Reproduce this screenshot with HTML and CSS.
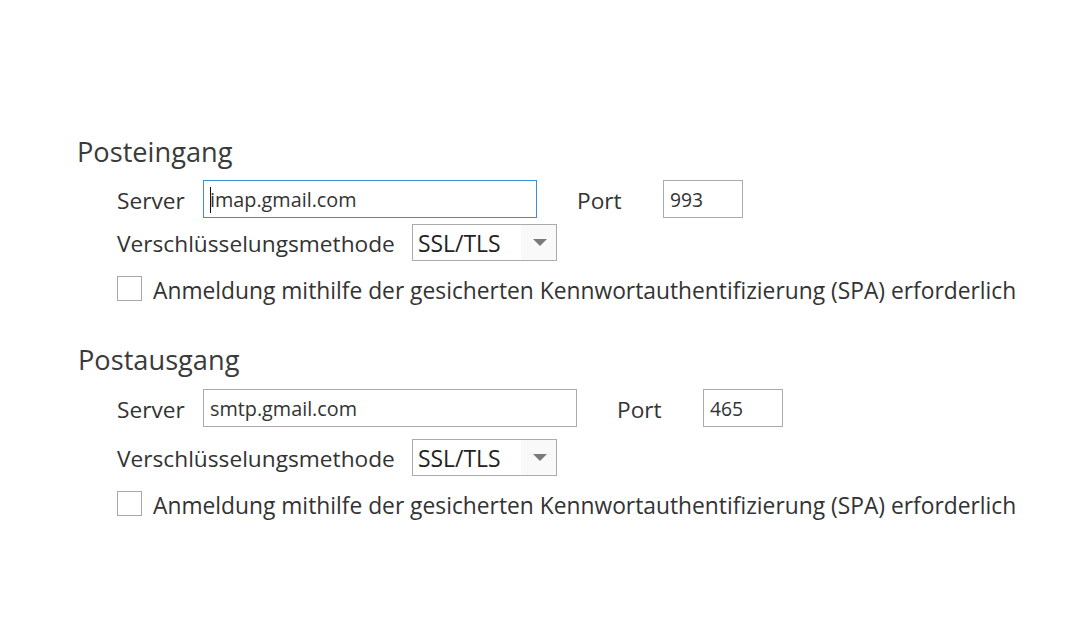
FILE: index.html
```html
<!DOCTYPE html>
<html lang="de">
<head>
<meta charset="utf-8">
<title>Servereinstellungen</title>
<link rel="stylesheet" href="styles.css">
</head>
<body>
<main class="page">
  <section class="group group-in">
    <h2 class="group-title">Posteingang</h2>
    <div class="row row-server">
      <span class="label label-short">Server</span>
      <div class="field field-server field-focus"><span class="caret"></span>imap.gmail.com</div>
      <span class="label label-short label-port">Port</span>
      <div class="field field-port">993</div>
    </div>
    <div class="row row-enc">
      <span class="label label-long">Verschlüsselungsmethode</span>
      <div class="select"><span class="select-value">SSL/TLS</span><span class="select-btn"><span class="arrow"></span></span></div>
    </div>
    <label class="check-row">
      <span class="check"></span>
      <span class="check-text">Anmeldung mithilfe der gesicherten Kennwortauthentifizierung (SPA) erforderlich</span>
    </label>
  </section>
  <section class="group group-out">
    <h2 class="group-title">Postausgang</h2>
    <div class="row row-server">
      <span class="label label-short">Server</span>
      <div class="field field-server field-wide">smtp.gmail.com</div>
      <span class="label label-short label-port">Port</span>
      <div class="field field-port">465</div>
    </div>
    <div class="row row-enc">
      <span class="label label-long">Verschlüsselungsmethode</span>
      <div class="select"><span class="select-value">SSL/TLS</span><span class="select-btn"><span class="arrow"></span></span></div>
    </div>
    <label class="check-row">
      <span class="check"></span>
      <span class="check-text">Anmeldung mithilfe der gesicherten Kennwortauthentifizierung (SPA) erforderlich</span>
    </label>
  </section>
</main>
</body>
</html>
```
FILE: styles.css
```css
* { box-sizing: border-box; }
html, body { margin: 0; padding: 0; background: #fff; }
body {
  width: 1085px;
  height: 644px;
  overflow: hidden;
  font-family: "Open Sans", "Noto Sans", sans-serif;
  color: #333;
}
.page {
  padding: 135px 0 0 77px;
}
.group-title {
  margin: 0;
  font-size: 27.2px;
  font-weight: 400;
  line-height: 34px;
  color: #3a3a3a;
}
.group-out { margin-top: 42px; }
.group-out .group-title { margin-left: 1px; }
.row {
  display: flex;
  align-items: center;
  padding-left: 40px;
}
.group-in .row-server { margin-top: 11px; }
.group-out .row-server { margin-top: 12px; }
.group-in .row-enc { margin-top: 6px; }
.group-out .row-enc { margin-top: 12px; }
.label {
  font-size: 22.7px;
  line-height: 28px;
  padding-top: 3px;
  color: #333;
  white-space: nowrap;
}
.label-short { width: 86px; flex: none; }
.label-port { margin-left: 40px; }
.label-long { width: 295px; flex: none; }
.field {
  height: 38px;
  border: 1px solid #ababab;
  font-size: 19.8px;
  line-height: 34px;
  padding: 2px 0 0 6px;
  color: #333;
  flex: none;
}
.field-server { width: 334px; }
.field-wide { width: 374px; }
.field-focus { border-color: #3c8fd6; }
.caret {
  display: inline-block;
  width: 1px;
  height: 26px;
  background: #111;
  vertical-align: -6px;
  margin-right: -1px;
}
.field-port { width: 80px; font-size: 19.3px; }
.select {
  display: flex;
  width: 145px;
  height: 37px;
  border: 1px solid #ababab;
  flex: none;
}
.select-value {
  flex: 1;
  font-size: 22.9px;
  line-height: 35px;
  padding: 1px 0 0 5px;
  color: #222;
  background: #fff;
}
.select-btn {
  width: 35px;
  display: flex;
  align-items: center;
  justify-content: center;
  background: #f9f9f9;
}
.arrow {
  width: 0;
  height: 0;
  border-left: 7px solid transparent;
  border-right: 7px solid transparent;
  border-top: 7px solid #7a7a7a;
  margin-left: 2px;
}
.check-row {
  display: flex;
  align-items: center;
  margin-top: 15px;
  padding-left: 40px;
  height: 25px;
}
.check {
  width: 25px;
  height: 25px;
  border: 1px solid #a8a8a8;
  background: #fff;
  flex: none;
}
.check-text {
  margin-left: 11px;
  font-size: 22.8px;
  line-height: 25px;
  padding-top: 4px;
  color: #333;
  white-space: nowrap;
}
```
